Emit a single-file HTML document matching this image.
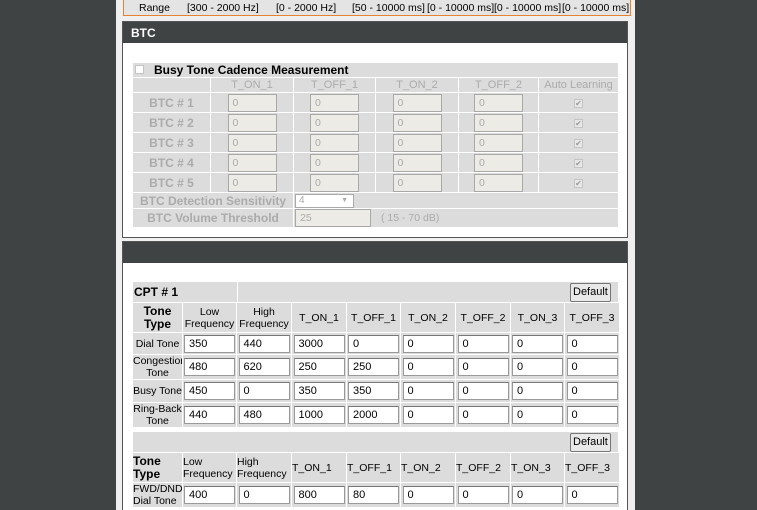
<!DOCTYPE html>
<html><head><meta charset="utf-8"><style>
*{box-sizing:border-box;margin:0;padding:0}
html,body{width:757px;height:510px;overflow:hidden}
body{background:#404343;font-family:"Liberation Sans",Tahoma,sans-serif;font-size:11px;color:#000;position:relative}
#col{position:absolute;left:116px;top:0;width:519px;height:510px;background:#efefef}
#range{position:absolute;left:123px;top:-2px;width:508px;height:18px;border:1px solid #e8822e;background:#e4e4e4;font-size:10.5px}
#range span{position:absolute;top:3px;white-space:nowrap}
.panel{position:absolute;left:122px;width:506px;background:#fff;border:1px solid #555}
.hdr{height:21px;background:#404343;color:#fff;font-weight:bold;font-size:12px;padding:4px 0 0 8px}
table{position:absolute;border-collapse:separate;border-spacing:1px;table-layout:fixed;background:#fff}
td{background:#dcdcdc;padding:0;text-align:center;overflow:hidden;white-space:nowrap}
.g td{color:#ababab}
.g .lb{font-weight:bold;font-size:12px}
.gi{display:inline-block;width:49px;height:18px;border:1px solid #a8a8a8;background:#ecebe6;color:#aaa;text-align:left;padding:0 4px;line-height:16px;font-size:10.5px;vertical-align:middle}
.ck{display:inline-block;width:9px;height:9px;border:1px solid #c4c4c4;background:#e8e8e8;font-size:8px;line-height:8px;color:#999}
.wi{display:block;margin:0 auto;width:51px;height:18px;border:1px solid #999;border-top-color:#777;background:#fff;text-align:left;padding:0 4px;line-height:16px;font-size:11px}
.c td{font-size:10.5px;line-height:12px}
.btn{position:absolute;border:1px solid #777;background:#e8e8e8;border-radius:2px;font-size:11px;padding:2px 2px;height:19px}
</style></head><body>
<div id="col"></div>
<div id="range">
<span style="left:15px">Range</span><span style="left:63px">[300 - 2000 Hz]</span><span style="left:152px">[0 - 2000 Hz]</span><span style="left:228px">[50 - 10000 ms]</span><span style="left:303px">[0 - 10000 ms]</span><span style="left:370px">[0 - 10000 ms]</span><span style="left:438px">[0 - 10000 ms]</span>
</div>

<div class="panel" style="top:21px;height:217px"><div class="hdr">BTC</div></div>
<table class="g" style="left:132px;top:62px;width:487px">
<colgroup><col style="width:77px"><col style="width:82px"><col style="width:81px"><col style="width:82px"><col style="width:79px"><col style="width:79px"></colgroup>
<tr style="height:14px"><td colspan="6" style="text-align:left;color:#000;font-weight:bold;font-size:12px;padding-left:2px"><span class="ck" style="background:#fff;margin-right:10px"></span>Busy Tone Cadence Measurement</td></tr>
<tr style="height:14px"><td></td><td>T_ON_1</td><td>T_OFF_1</td><td>T_ON_2</td><td>T_OFF_2</td><td>Auto Learning</td></tr>
<tr style="height:19px"><td class="lb">BTC # 1</td><td><span class="gi">0</span></td><td><span class="gi">0</span></td><td><span class="gi">0</span></td><td><span class="gi">0</span></td><td><span class="ck">✔</span></td></tr>
<tr style="height:19px"><td class="lb">BTC # 2</td><td><span class="gi">0</span></td><td><span class="gi">0</span></td><td><span class="gi">0</span></td><td><span class="gi">0</span></td><td><span class="ck">✔</span></td></tr>
<tr style="height:19px"><td class="lb">BTC # 3</td><td><span class="gi">0</span></td><td><span class="gi">0</span></td><td><span class="gi">0</span></td><td><span class="gi">0</span></td><td><span class="ck">✔</span></td></tr>
<tr style="height:19px"><td class="lb">BTC # 4</td><td><span class="gi">0</span></td><td><span class="gi">0</span></td><td><span class="gi">0</span></td><td><span class="gi">0</span></td><td><span class="ck">✔</span></td></tr>
<tr style="height:19px"><td class="lb">BTC # 5</td><td><span class="gi">0</span></td><td><span class="gi">0</span></td><td><span class="gi">0</span></td><td><span class="gi">0</span></td><td><span class="ck">✔</span></td></tr>
<tr style="height:15px"><td class="lb" colspan="2">BTC Detection Sensitivity</td><td colspan="4" style="text-align:left;padding-left:1px"><span style="display:inline-block;width:59px;height:14px;border:1px solid #aaa;background:#fff;font-size:10px;line-height:12px;padding:0 3px;position:relative">4<span style="position:absolute;right:5px;top:0;font-size:7px">▼</span></span></td></tr>
<tr style="height:17px"><td class="lb" colspan="2">BTC Volume Threshold</td><td colspan="4" style="text-align:left;padding-left:1px"><span class="gi" style="width:76px">25</span><span style="margin-left:10px;font-size:10.5px">( 15 - 70 dB)</span></td></tr>
</table>

<div class="panel" style="top:241px;height:275px"><div class="hdr"></div></div>
<table style="left:132px;top:281px;width:487px">
<colgroup><col style="width:104px"><col style="width:380px"></colgroup>
<tr style="height:20px"><td style="text-align:left;font-weight:bold;font-size:12px;padding-left:1px">CPT # 1</td><td></td></tr>
</table>
<div class="btn" style="left:570px;top:283px">Default</div>
<table class="c" style="left:132px;top:302px;width:487px">
<colgroup><col style="width:49px"><col style="width:53px"><col style="width:54px"><col style="width:54px"><col style="width:53px"><col style="width:54px"><col style="width:54px"><col style="width:53px"><col style="width:54px"></colgroup>
<tr style="height:29px"><td style="font-weight:bold;font-size:12px;line-height:13px">Tone<br>Type</td><td>Low<br>Frequency</td><td>High<br>Frequency</td><td>T_ON_1</td><td>T_OFF_1</td><td>T_ON_2</td><td>T_OFF_2</td><td>T_ON_3</td><td>T_OFF_3</td></tr>
<tr style="height:21px"><td>Dial Tone</td><td><span class="wi">350</span></td><td><span class="wi">440</span></td><td><span class="wi">3000</span></td><td><span class="wi">0</span></td><td><span class="wi">0</span></td><td><span class="wi">0</span></td><td><span class="wi">0</span></td><td><span class="wi">0</span></td></tr>
<tr style="height:22px"><td>Congestion<br>Tone</td><td><span class="wi">480</span></td><td><span class="wi">620</span></td><td><span class="wi">250</span></td><td><span class="wi">250</span></td><td><span class="wi">0</span></td><td><span class="wi">0</span></td><td><span class="wi">0</span></td><td><span class="wi">0</span></td></tr>
<tr style="height:22px"><td>Busy Tone</td><td><span class="wi">450</span></td><td><span class="wi">0</span></td><td><span class="wi">350</span></td><td><span class="wi">350</span></td><td><span class="wi">0</span></td><td><span class="wi">0</span></td><td><span class="wi">0</span></td><td><span class="wi">0</span></td></tr>
<tr style="height:22px"><td>Ring-Back<br>Tone</td><td><span class="wi">440</span></td><td><span class="wi">480</span></td><td><span class="wi">1000</span></td><td><span class="wi">2000</span></td><td><span class="wi">0</span></td><td><span class="wi">0</span></td><td><span class="wi">0</span></td><td><span class="wi">0</span></td></tr>
</table>
<table style="left:132px;top:431px;width:487px">
<tr style="height:21px"><td></td></tr>
</table>
<div class="btn" style="left:570px;top:433px">Default</div>
<table class="c" style="left:132px;top:452px;width:487px">
<colgroup><col style="width:49px"><col style="width:53px"><col style="width:54px"><col style="width:54px"><col style="width:53px"><col style="width:54px"><col style="width:54px"><col style="width:53px"><col style="width:54px"></colgroup>
<tr style="height:29px"><td style="font-weight:bold;font-size:12px;line-height:13px;text-align:left">Tone<br>Type</td><td style="text-align:left">Low<br>Frequency</td><td style="text-align:left">High<br>Frequency</td><td style="text-align:left">T_ON_1</td><td style="text-align:left">T_OFF_1</td><td style="text-align:left">T_ON_2</td><td style="text-align:left">T_OFF_2</td><td style="text-align:left">T_ON_3</td><td style="text-align:left">T_OFF_3</td></tr>
<tr style="height:22px"><td style="text-align:left">FWD/DND<br>Dial Tone</td><td><span class="wi">400</span></td><td><span class="wi">0</span></td><td><span class="wi">800</span></td><td><span class="wi">80</span></td><td><span class="wi">0</span></td><td><span class="wi">0</span></td><td><span class="wi">0</span></td><td><span class="wi">0</span></td></tr>
</table>
</body></html>
